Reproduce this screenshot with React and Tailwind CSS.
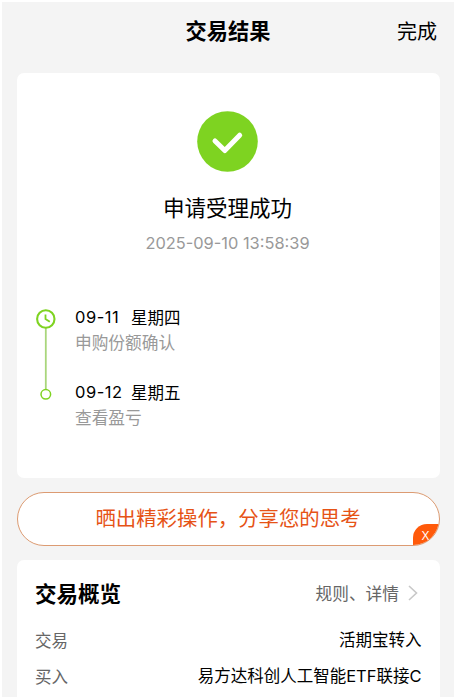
import React from 'react'

const steps = [
    { date: '09-11', day: '星期四', text: '申购份额确认' },
    { date: '09-12', day: '星期五', text: '查看盈亏' },
]

const rows = [
    { label: '交易', value: '活期宝转入' },
    { label: '买入', value: '易方达科创人工智能ETF联接C' },
]

function Header() {
    return (
        <header className="grid grid-cols-3 items-center h-[57px] pl-[17px] pr-[17px]">
            <span />
            <h1 className="pb-px text-center text-[21.2px] font-bold leading-none">交易结果</h1>
            <button className="text-right text-[20px] leading-none">完成</button>
        </header>
    )
}

function Timeline() {
    return (
        <div className="flex mt-[53px] pl-[18px]">
            <svg className="w-[22px] h-[98px] shrink-0" viewBox="0 0 22 98" fill="none">
                <path d="M10.8 21V82" stroke="#a9d67c" strokeWidth="1.8" />
                <circle cx="10.8" cy="12" r="8.7" stroke="#7ed321" strokeWidth="2.1" />
                <path d="M10.5 7.6V12L14.8 14.8" stroke="#7ed321" strokeWidth="1.8" />
                <circle cx="10.8" cy="87.3" r="4.8" stroke="#7ed321" strokeWidth="1.5" />
            </svg>
            <div className="pl-[18.5px]">
                {steps.map((el) => (
                    <div key={el.date} className="h-[75px]">
                        <div className="flex text-[16.5px] leading-[20px]">
                            <span className="w-[56px] tracking-[0.5px] font-['Inter',sans-serif]">{el.date}</span>
                            <span>{el.day}</span>
                        </div>
                        <p className="mt-[5px] text-[16.7px] leading-[20px] text-[#999]">{el.text}</p>
                    </div>
                ))}
            </div>
        </div>
    )
}

function Result() {
    return (
        <section className="h-[405px] rounded-[7px] bg-white pt-[38px]">
            <div className="pr-[1px]">
                <svg className="block mx-auto w-[61px] h-[61px]" viewBox="0 0 61 61" fill="none">
                    <circle cx="30.5" cy="30.5" r="30.3" fill="#7ed321" />
                    <path d="M18 30L27.8 39.5L42.7 24.2" stroke="#fff" strokeWidth="5" strokeLinecap="round" strokeLinejoin="round" />
                </svg>
                <h2 className="mt-[20px] text-center text-[21.5px] leading-[30px]">申请受理成功</h2>
                <p className="mt-[10px] text-center text-[16.4px] leading-[22px] text-[#999] font-['Inter',sans-serif]">2025-09-10 13:58:39</p>
            </div>
            <Timeline />
        </section>
    )
}

function Banner() {
    return (
        <section className="relative mt-[14px] h-[54px] rounded-full border border-[#dc9b72] bg-white overflow-hidden">
            <p className="text-center text-[20.4px] leading-[48px] text-[#e65316]">晒出精彩操作，分享您的思考</p>
            <button className="absolute right-0 bottom-0 w-[26px] h-[21px] rounded-tl-[14px] bg-[#ff5a0a] text-white text-[13px] leading-[20px] font-['Open_Sans',sans-serif]">X</button>
        </section>
    )
}

function Overview() {
    return (
        <section className="mt-[14px] h-[137px] rounded-t-[7px] bg-white pl-[18.5px] pr-[18px] pt-[17.5px]">
            <div className="flex items-center justify-between h-[32px]">
                <h2 className="pb-[2px] text-[21.5px] font-bold leading-none">交易概览</h2>
                <a className="flex items-center text-[16.7px] leading-none text-[#666]">
                    规则、详情
                    <svg className="ml-[9px] mr-[3.5px] w-[10px] h-[16px]" viewBox="0 0 10 16" fill="none">
                        <path d="M1 1L8.5 8L1 15" stroke="#c8c8c8" strokeWidth="1.6" />
                    </svg>
                </a>
            </div>
            <div className="mt-[12px]">
                {rows.map((el) => (
                    <div key={el.label} className="flex justify-between h-[36px] text-[16.5px] leading-[36px]">
                        <span className="text-[#666]">{el.label}</span>
                        <span className="font-['Inter','Noto_Sans_CJK_SC',sans-serif]">{el.value}</span>
                    </div>
                ))}
            </div>
        </section>
    )
}

export default function App() {
    return (
        <div className="h-[699px] overflow-hidden bg-white pt-[2px] pl-[2px] pr-[2px] text-black font-['Noto_Sans_CJK_SC',sans-serif]">
            <div className="h-[695px] bg-[#f4f4f4]">
                <Header />
                <main className="pt-[14px] pl-[14.5px] pr-[14.5px]">
                    <Result />
                    <Banner />
                    <Overview />
                </main>
            </div>
        </div>
    )
}
